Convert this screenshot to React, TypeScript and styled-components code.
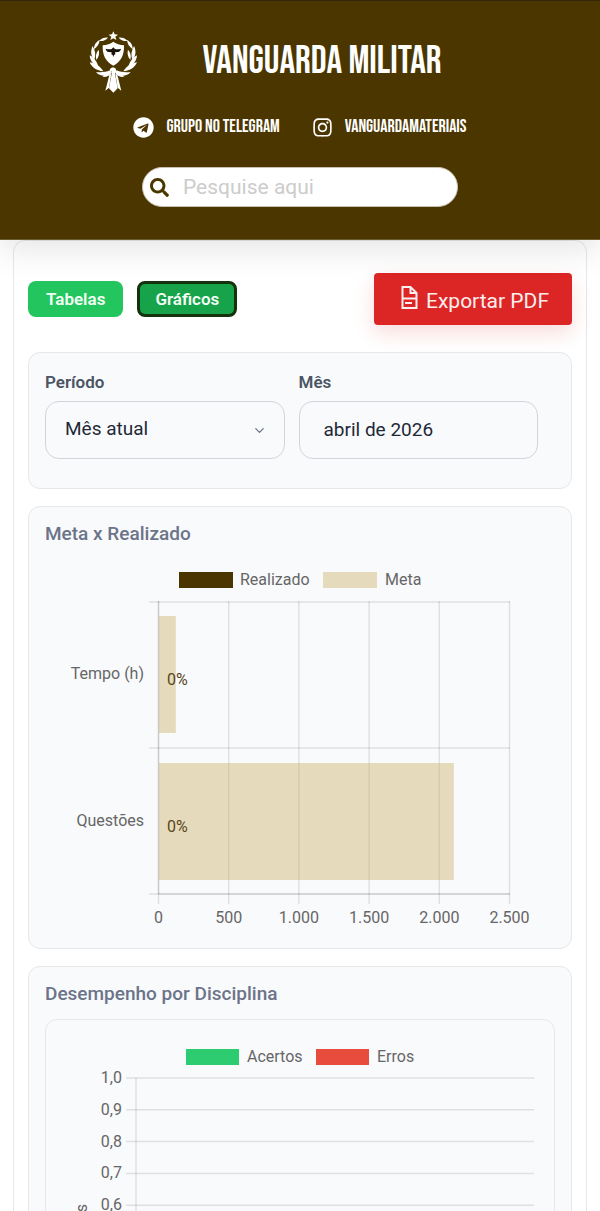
import React from "react";
import styled, { createGlobalStyle } from "styled-components";
import { FaInstagram, FaSearch, FaTelegram } from "react-icons/fa";
import { ChevronDown } from "lucide-react";

const GlobalStyle = createGlobalStyle`
  *, *::before, *::after { box-sizing: border-box; }
  body {
    margin: 0;
    background: #ffffff;
    font-family: Roboto, "Liberation Sans", sans-serif;
    color: #1f2937;
  }
`;

const brown = "#4b3600";
const goalColor = "rgba(201, 172, 92, 0.4)";
const displayFont = `"Bebas Neue", "Liberation Sans Narrow", "Roboto Condensed", Roboto, sans-serif`;

const Page = styled.div`
  display: flex;
  flex-direction: column;
  height: 100vh;
  overflow: hidden;
`;

const Header = styled.header`
  position: relative;
  z-index: 1;
  flex: none;
  display: flex;
  flex-direction: column;
  align-items: center;
  padding: 30px 16px 32px;
  background: ${brown};
  border-top: 1px solid #33270c;
  border-bottom: 1px solid #6a5a30;
  box-shadow: 0 10px 30px rgba(0, 0, 0, 0.1);
`;

const Brand = styled.div`
  display: flex;
  align-items: center;
  gap: 64px;
  padding-right: 70px;
`;

const Title = styled.h1`
  margin: 0;
  font: 400 39px/60px ${displayFont};
  color: #ffffff;
  white-space: nowrap;
`;

const Links = styled.nav`
  display: flex;
  justify-content: center;
  gap: 32px;
  margin-top: 22px;
`;

const SocialLink = styled.a`
  display: flex;
  align-items: center;
  gap: 12px;
  font: 400 18px/24px ${displayFont};
  color: #ffffff;
  text-decoration: none;
  white-space: nowrap;
`;

const Search = styled.label`
  display: flex;
  align-items: center;
  gap: 14px;
  width: 100%;
  max-width: 316px;
  height: 40px;
  margin-top: 28px;
  padding: 0 16px 0 7px;
  border: 1px solid #c9c2b2;
  border-radius: 20px;
  background: #ffffff;
  color: ${brown};
`;

const SearchInput = styled.input`
  flex: 1;
  min-width: 0;
  padding: 0;
  border: 0;
  outline: 0;
  background: transparent;
  font: 400 21px/28px Roboto, sans-serif;
  color: #1f2937;
  &::placeholder { color: #cccccc; opacity: 1; }
`;

const Main = styled.main`
  flex: 1;
  min-height: 0;
  overflow-y: auto;
  scrollbar-width: none;
  padding: 0 13px;
`;

const Panel = styled.div`
  display: flex;
  flex-direction: column;
  gap: 17px;
  padding: 32px 14px;
  border: 1px solid #e5e7eb;
  border-radius: 12px;
`;

const Toolbar = styled.div`
  display: flex;
  align-items: center;
  gap: 14px;
  margin-bottom: 10px;
`;

const TabButton = styled.button<{ $active?: boolean }>`
  height: 36px;
  padding: 0 ${(p) => (p.$active ? 15 : 18)}px;
  border: ${(p) => (p.$active ? "3px solid #14330c" : "0")};
  border-radius: 8px;
  background: ${(p) => (p.$active ? "#16a34a" : "#22c55e")};
  font: 600 17px/20px Roboto, sans-serif;
  color: #f3fff5;
`;

const ExportButton = styled.button`
  display: flex;
  align-items: center;
  justify-content: center;
  gap: 8px;
  height: 52px;
  margin-left: auto;
  padding: 4px 23px 0 27px;
  border: 0;
  border-radius: 4px;
  background: #dc2626;
  box-shadow: 0 8px 20px rgba(220, 38, 38, 0.16);
  font: 400 21px/28px Roboto, sans-serif;
  color: #fdeeee;
  svg { margin-bottom: 8px; }
`;

const Card = styled.section`
  padding: 16px;
  border: 1px solid #e5e7eb;
  border-radius: 12px;
  background: #f9fafc;
`;

const Filters = styled(Card)`
  display: grid;
  grid-template-columns: repeat(2, minmax(0, 1fr));
  gap: 14px;
  padding: 16px 33px 29px 16px;
`;

const Field = styled.label`
  display: flex;
  flex-direction: column;
  gap: 6px;
  font: 600 17px/26px Roboto, sans-serif;
  color: #4b5563;
`;

const Control = styled.span`
  display: flex;
  align-items: center;
  height: 58px;
  border: 1px solid #d1d5db;
  border-radius: 14px;
  padding-right: 17px;
`;

const Select = styled.select`
  flex: 1;
  min-width: 0;
  height: 100%;
  padding: 0 0 2px 19px;
  border: 0;
  outline: 0;
  appearance: none;
  background: transparent;
  font: 400 19px/24px Roboto, sans-serif;
  color: #1f2937;
`;

const MonthInput = styled.input`
  flex: 1;
  min-width: 0;
  height: 100%;
  padding: 0 0 2px 24px;
  border: 0;
  outline: 0;
  background: transparent;
  font: 400 19px/24px Roboto, sans-serif;
  color: #1f2937;
`;

const CardTitle = styled.h2`
  margin: 0;
  font: 500 19px/22px Roboto, sans-serif;
  color: #6b7488;
`;

const ChartFrame = styled.div`
  margin-top: 14px;
  border: 1px solid #e5e7eb;
  border-radius: 12px;
`;

const Chart = styled.svg`
  display: block;
  width: 100%;
  height: auto;
  font: 400 16px Roboto, sans-serif;
  fill: #666666;
`;

const Logo = () => (
  <svg width="50" height="62" viewBox="22 90 150 186" fill="#ffffff" aria-hidden="true">
    <path d="M98 91l4 9 10 1-8 6 3 10-9-5-9 5 3-10-8-6 10-1z" />
    <path d="M98 122c9 7 20 10 32 11 1 28-8 49-32 61-24-12-33-33-32-61 12-1 23-4 32-11z" />
    <path
      fill="#17130a"
      d="M75 143c7 2 13 2 18 1l5-5 5 5c5 1 11 1 18-1-1 6-4 9-9 10l-9 1 1 6-4 2-2 6-2-6-4-2 1-6-9-1c-5-1-8-4-9-10z"
    />
    {[false, true].map((flip) => (
      <g key={String(flip)} transform={flip ? "matrix(-1 0 0 1 196 0)" : undefined}>
        <path d="M82 110c-10-1-20 2-27 10 12 1 20-2 27-10z" />
        <path d="M57 117c-12 6-17 15-17 28 10-8 16-16 17-28z" />
        <path d="M36 135c-7 15-6 29 5 42 5-15 3-28-5-42z" />
        <path d="M54 146c-8 9-10 19-7 31 8-10 10-20 7-31z" />
        <path d="M27 163c1 16 10 28 27 38-4-17-12-30-27-38z" />
        <path d="M27 184c7 16 20 25 41 27-9-15-22-24-41-27z" />
        <path d="M46 213c15 2 28 1 42-5l5 6c-5 11-15 15-28 14l5-4c-9 0-18-3-24-11z" />
        <path d="M86 222l6-4-7 42-11 9z" />
      </g>
    ))}
    <path d="M88 204c3-4 8-6 13-4 5 2 6 6 5 11l-3 8 8 43-13 13-13-13 8-43-1-9-4 1z" />
  </svg>
);

const FileIcon = () => (
  <svg width="17" height="23" viewBox="0 0 17 23" fill="none" stroke="currentColor" strokeWidth="2" aria-hidden="true">
    <path d="M9.500 1H1.500v21h14V7zM9.500 1v6h6.500M2 12.500h13.500M4 17h7" />
  </svg>
);

const xTicks = ["0", "500", "1.000", "1.500", "2.000", "2.500"];
const goals = [
  { label: "Tempo (h)", value: 120, result: "0%" },
  { label: "Questões", value: 2100, result: "0%" },
];
const yTicks = ["1,0", "0,9", "0,8", "0,7", "0,6", "0,5", "0,4", "0,3", "0,2", "0,1", "0"];

const GoalChart = () => (
  <Chart viewBox="0 0 510 387" role="img" aria-label="Meta x Realizado">
    <rect x="134" y="27" width="54" height="16" fill={brown} />
    <text x="195" y="40">Realizado</text>
    <rect x="278" y="27" width="54" height="16" fill={goalColor} />
    <text x="340" y="40">Meta</text>
    <g stroke="rgba(0,0,0,0.1)" strokeWidth="1.500">
      {[57, 203, 349].map((y) => (
        <line key={y} x1="104" x2="465" y1={y} y2={y} />
      ))}
      {xTicks.map((t, i) => (
        <line key={t} x1={113.5 + i * 70.2} x2={113.5 + i * 70.2} y1="56" y2="359" />
      ))}
      <line x1="113.500" x2="113.500" y1="56" y2="349" />
      <line x1="113" x2="465" y1="349" y2="349" />
    </g>
    {goals.map((g, i) => (
      <g key={g.label}>
        <rect x="114" y={71 + i * 147} width={(g.value * 351) / 2500} height="117" fill={goalColor} />
        <text x="99" y={134 + i * 147} textAnchor="end">{g.label}</text>
        <text x="122" y={140 + i * 147} fill="#5a4519">{g.result}</text>
      </g>
    ))}
    {xTicks.map((t, i) => (
      <text key={t} x={113.5 + i * 70.2} y="378" textAnchor="middle">{t}</text>
    ))}
  </Chart>
);

const SubjectChart = () => (
  <Chart viewBox="0 0 508 420" role="img" aria-label="Desempenho por Disciplina">
    <rect x="140" y="29" width="53" height="16" fill="#2ecc71" />
    <text x="201" y="42">Acertos</text>
    <rect x="270" y="29" width="53" height="16" fill="#e74c3c" />
    <text x="331" y="42">Erros</text>
    <g stroke="rgba(0,0,0,0.1)" strokeWidth="1.500">
      {yTicks.map((t, i) => (
        <line key={t} x1="80" x2="488" y1={58 + i * 31.8} y2={58 + i * 31.8} />
      ))}
      <line x1="90" x2="90" y1="58" y2="376" />
    </g>
    {yTicks.map((t, i) => (
      <text key={t} x="76" y={63 + i * 31.8} textAnchor="end">{t}</text>
    ))}
    <text transform="translate(41 184) rotate(-90)" textAnchor="end">Questões</text>
  </Chart>
);

export default function App() {
  return (
    <Page>
      <GlobalStyle />
      <Header>
        <Brand>
          <Logo />
          <Title>VANGUARDA MILITAR</Title>
        </Brand>
        <Links>
          <SocialLink href="#telegram">
            <FaTelegram size={21} />
            GRUPO NO TELEGRAM
          </SocialLink>
          <SocialLink href="#instagram">
            <FaInstagram size={21} />
            VANGUARDAMATERIAIS
          </SocialLink>
        </Links>
        <Search>
          <FaSearch size={19} />
          <SearchInput type="search" placeholder="Pesquise aqui" aria-label="Pesquise aqui" />
        </Search>
      </Header>
      <Main>
        <Panel>
          <Toolbar>
            <TabButton type="button">Tabelas</TabButton>
            <TabButton type="button" $active aria-pressed="true">Gráficos</TabButton>
            <ExportButton type="button">
              <FileIcon />
              Exportar PDF
            </ExportButton>
          </Toolbar>
          <Filters>
            <Field>
              Período
              <Control>
                <Select defaultValue="atual">
                  <option value="atual">Mês atual</option>
                </Select>
                <ChevronDown size={15} color="#6b7280" />
              </Control>
            </Field>
            <Field>
              Mês
              <Control>
                <MonthInput type="text" defaultValue="abril de 2026" />
              </Control>
            </Field>
          </Filters>
          <Card>
            <CardTitle>Meta x Realizado</CardTitle>
            <GoalChart />
          </Card>
          <Card>
            <CardTitle>Desempenho por Disciplina</CardTitle>
            <ChartFrame>
              <SubjectChart />
            </ChartFrame>
          </Card>
        </Panel>
      </Main>
    </Page>
  );
}
